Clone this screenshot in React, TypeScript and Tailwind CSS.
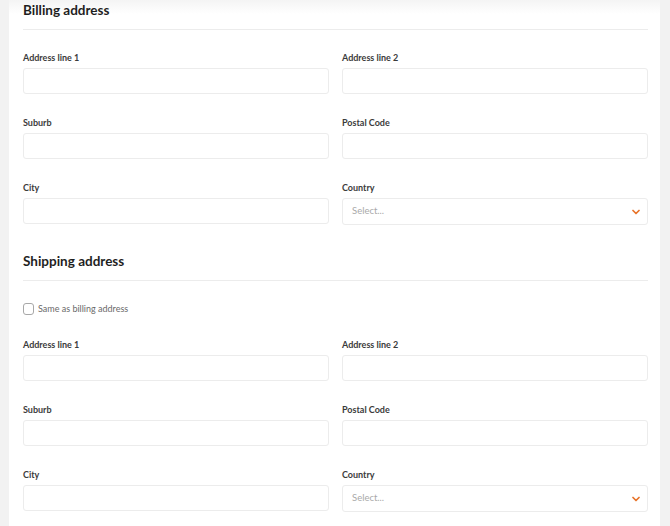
import React from "react";

const font = { fontFamily: "Lato, 'Open Sans', sans-serif" };

function Field({ label, select }: { label: string; select?: boolean }) {
  return (
    <div className="flex flex-col">
      <label className="pt-[1px] text-[9px] leading-[16px] font-bold text-[#3b3b3b]">{label}</label>
      {select ? (
        <div className="mt-[2px] flex h-[27px] items-center justify-between rounded-[3px] border border-[#ececec] bg-white pl-[9px] pr-[7px]">
          <span className="text-[9.5px] text-[#a9a9a9]">Select...</span>
          <svg width="8" height="6" viewBox="0 0 8 6" fill="none">
            <path d="M1 1.5l3 3 3-3" stroke="#e8742a" strokeWidth="1.7" strokeLinecap="round" strokeLinejoin="round" />
          </svg>
        </div>
      ) : (
        <input className="mt-[2px] h-[26px] rounded-[3px] border border-[#ececec] bg-white outline-none" />
      )}
    </div>
  );
}

function AddressGrid() {
  return (
    <div className="grid grid-cols-2 gap-x-[13px] gap-y-[20px]">
      <Field label="Address line 1" />
      <Field label="Address line 2" />
      <Field label="Suburb" />
      <Field label="Postal Code" />
      <Field label="City" />
      <Field label="Country" select />
    </div>
  );
}

function Heading({ children }: { children: React.ReactNode }) {
  return (
    <div className="border-b border-[#ececec] pb-[9px]">
      <h2 className="text-[13.5px] leading-[20px] font-bold text-[#1f1f1f]">{children}</h2>
    </div>
  );
}

export default function App() {
  return (
    <div className="min-h-screen bg-[#f2f2f2] pl-[9px] pr-[10px]" style={font}>
      <div className="relative min-h-screen bg-white pl-[14px] pr-[12px]">
        <div className="pointer-events-none absolute inset-x-0 top-0 h-[14px] bg-gradient-to-b from-[#f4f4f4] to-white" />
        <div className="relative">
          <Heading>Billing address</Heading>
          <div className="mt-[19px]">
            <AddressGrid />
          </div>
          <div className="mt-[26px]">
            <Heading>Shipping address</Heading>
          </div>
          <label className="mt-[20px] flex h-[16px] items-center gap-[4px]">
            <span className="h-[12px] w-[11px] rounded-[3px] border border-[#a8a8a8] bg-white" />
            <span className="text-[9px] text-[#6a6a6a]">Same as billing address</span>
          </label>
          <div className="mt-[19px]">
            <AddressGrid />
          </div>
        </div>
      </div>
    </div>
  );
}
